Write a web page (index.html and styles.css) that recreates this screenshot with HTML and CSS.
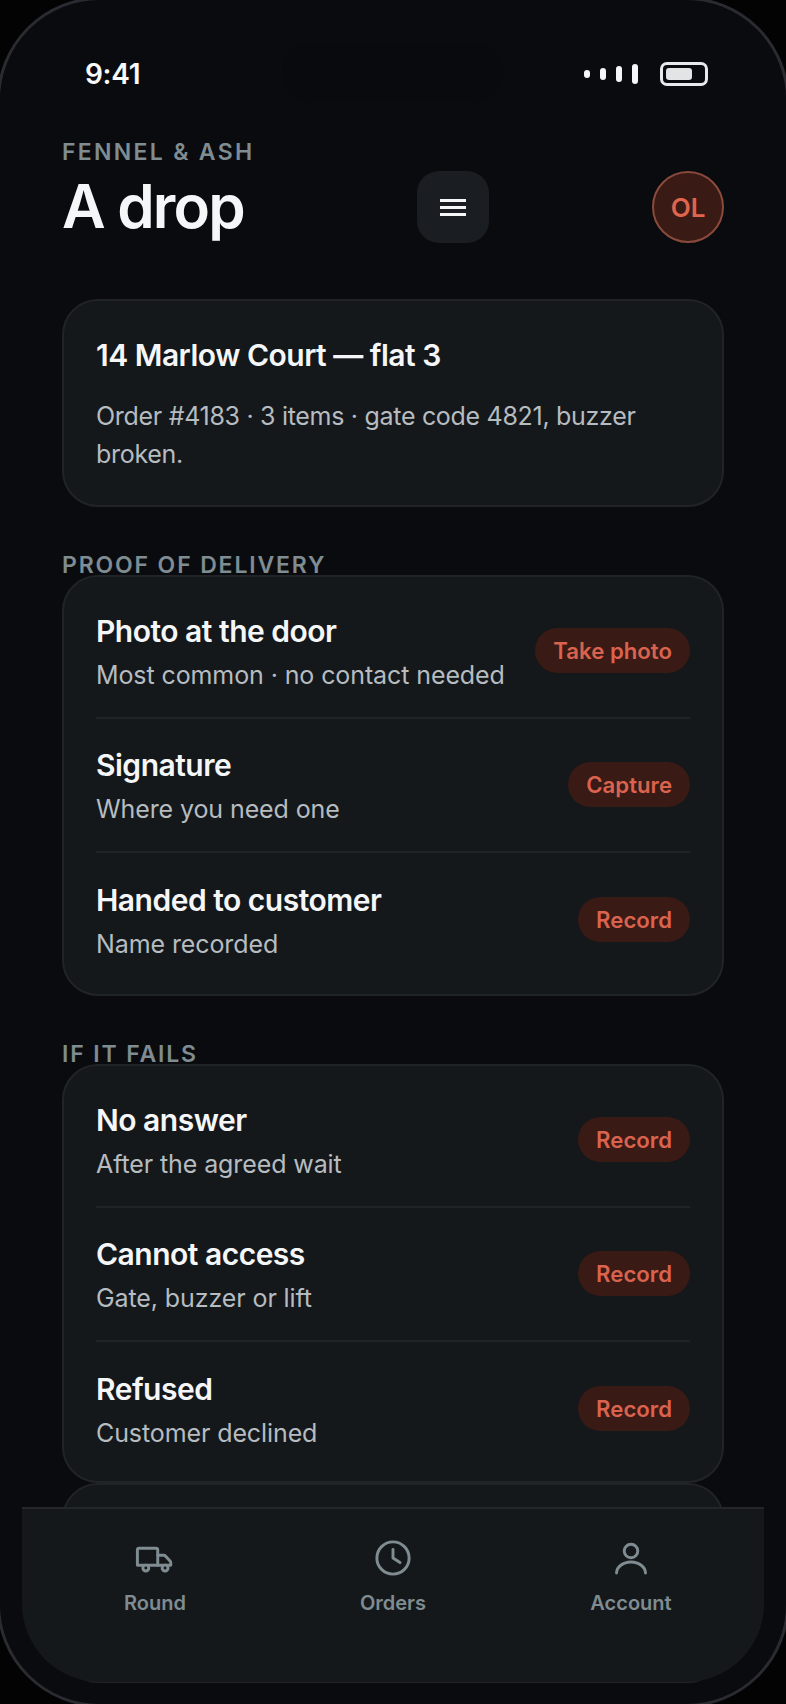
FILE: index.html
```html
<!DOCTYPE html>
<html lang="en">
<head>
<meta charset="utf-8">
<title>A drop</title>
<link rel="stylesheet" href="styles.css">
</head>
<body>
<div class="device">
  <div class="island"></div>
  <div class="status">
    <span class="time">9:41</span>
    <div class="status-icons">
      <div class="signal">
        <i class="s1"></i><i class="s2"></i><i class="s3"></i><i class="s4"></i>
      </div>
      <div class="battery"><i></i></div>
    </div>
  </div>
  <header class="header">
    <div class="heading">
      <div class="brand">FENNEL &amp; ASH</div>
      <h1 class="title">A drop</h1>
    </div>
    <button class="menu" aria-label="Menu"><i></i><i></i><i></i></button>
    <div class="avatar">OL</div>
  </header>
  <main class="content">
    <section class="card summary">
      <h2 class="summary-title">14 Marlow Court — flat 3</h2>
      <p class="summary-text">Order #4183 · 3 items · gate code 4821, buzzer broken.</p>
    </section>
    <h3 class="section-label">PROOF OF DELIVERY</h3>
    <section class="card list">
      <div class="row"><div class="row-text"><div class="row-title">Photo at the door</div><div class="row-sub">Most common · no contact needed</div></div><span class="pill">Take photo</span></div>
      <div class="row"><div class="row-text"><div class="row-title">Signature</div><div class="row-sub">Where you need one</div></div><span class="pill">Capture</span></div>
      <div class="row"><div class="row-text"><div class="row-title">Handed to customer</div><div class="row-sub">Name recorded</div></div><span class="pill">Record</span></div>
    </section>
    <h3 class="section-label">IF IT FAILS</h3>
    <section class="card list list-tight">
      <div class="row"><div class="row-text"><div class="row-title">No answer</div><div class="row-sub">After the agreed wait</div></div><span class="pill">Record</span></div>
      <div class="row"><div class="row-text"><div class="row-title">Cannot access</div><div class="row-sub">Gate, buzzer or lift</div></div><span class="pill">Record</span></div>
      <div class="row"><div class="row-text"><div class="row-title">Refused</div><div class="row-sub">Customer declined</div></div><span class="pill">Record</span></div>
    </section>
    <section class="card peek"></section>
  </main>
  <nav class="tabbar">
    <div class="tab">
      <svg class="tab-icon" viewBox="0 0 24 24"><path d="M2.400 16V7.700a1 1 0 0 1 1-1h9.100a1 1 0 0 1 1 1V16z"/><path d="M13.500 10.500h3.200a1.500 1.500 0 0 1 1.100.5l2.400 2.600a1 1 0 0 1 .4.8V16h-7.100"/><circle class="wheel" cx="7" cy="17.500" r="1.600"/><circle class="wheel" cx="17.500" cy="17.500" r="1.600"/></svg>
      <span class="tab-label">Round</span>
    </div>
    <div class="tab">
      <svg class="tab-icon" viewBox="0 0 24 24"><circle cx="12" cy="12" r="8.800"/><path d="M12 7.300V12l3.800 2.500"/></svg>
      <span class="tab-label">Orders</span>
    </div>
    <div class="tab">
      <svg class="tab-icon" viewBox="0 0 24 24"><circle cx="12" cy="8.200" r="3.700"/><path d="M4.100 20.200a7.900 6 0 0 1 15.800 0"/></svg>
      <span class="tab-label">Account</span>
    </div>
  </nav>
</div>
</body>
</html>
```
FILE: styles.css
```css
* { box-sizing: border-box; }
html, body { margin: 0; padding: 0; background: #030304; }
body { width: 786px; height: 1704px; overflow: hidden; font-family: Inter, "Liberation Sans", sans-serif; color: #f5f6f8; }
.device { position: relative; width: 786px; height: 1704px; border-radius: 100px; background: #0a0b0e; }
.device::after { content: ""; position: absolute; inset: -3px; border: 3px solid #2a2a30; border-radius: 103px; pointer-events: none; }
.island { position: absolute; left: 282px; top: 43px; width: 222px; height: 59px; border-radius: 30px; background: #090a0d; }
.status { position: relative; top: 62px; display: flex; align-items: center; justify-content: space-between; height: 24px; margin: 0 78px 0 85px; }
.time { font-size: 28px; font-weight: 600; line-height: 24px; letter-spacing: -0.3px; color: #f8f9fa; }
.status-icons { display: flex; align-items: center; gap: 22px; }
.signal { display: flex; align-items: center; gap: 10px; }
.signal i { display: block; width: 6px; border-radius: 3px; background: #f5f6f8; }
.s1 { height: 8px; } .s2 { height: 12px; } .s3 { height: 16px; } .s4 { height: 20px; }
.battery { width: 48px; height: 24px; padding: 3px; border: 3px solid #e8e9ec; border-radius: 7px; }
.battery i { display: block; width: 26px; height: 12px; border-radius: 3px; background: #e3e4e6; }
.header { display: flex; align-items: flex-end; justify-content: space-between; padding: 114px 62px 0; }
.heading { width: 192px; }
.brand { font-size: 23px; font-weight: 600; letter-spacing: 0.1em; line-height: 28px; color: #7f8c91; white-space: nowrap; }
.title { margin: 3px 0 0; font-size: 60px; font-weight: 600; letter-spacing: -0.03em; line-height: 74px; color: #f5f6f8; white-space: nowrap; }
.menu { display: flex; flex-direction: column; align-items: center; justify-content: center; gap: 4px; width: 72px; height: 72px; padding: 0; border: 0; border-radius: 22px; background: #1a1e23; }
.menu i { display: block; width: 26px; height: 3px; background: #f5f6f8; }
.avatar { display: flex; align-items: center; justify-content: center; width: 72px; height: 72px; border: 2px solid #8a4a3c; border-radius: 50%; background: #3a1a14; color: #e0654f; font-size: 26px; font-weight: 600; }
.content { padding: 56px 62px 0; }
.card { background: #14181b; border: 2px solid #202428; border-radius: 36px; }
.summary { height: 208px; padding: 35px 32px 0; }
.summary-title { margin: 0; font-size: 30px; font-weight: 600; letter-spacing: -0.5px; line-height: 38px; color: #f5f6f8; }
.summary-text { margin: 23px 0 0; font-size: 25px; letter-spacing: -0.3px; line-height: 38px; color: #b6bcc0; }
.section-label { margin: 47px 0 -2px; font-size: 23px; font-weight: 600; letter-spacing: 1.85px; line-height: 23px; color: #7f8c91; }
.list { padding: 8px 32px 7px; }
.list-tight { padding-bottom: 5px; }
.row { display: flex; align-items: center; justify-content: space-between; height: 134px; border-bottom: 2px solid #202428; }
.row:last-child { border-bottom: 0; }
.row-text { padding-top: 2px; }
.row-title { font-size: 30px; font-weight: 600; letter-spacing: -0.5px; line-height: 40px; color: #f5f6f8; }
.row-sub { margin-top: 6px; font-size: 25px; letter-spacing: -0.1px; line-height: 36px; color: #b6bcc0; }
.pill { margin-bottom: 1px; padding: 0 18px; height: 45px; line-height: 45px; border-radius: 23px; background: #3a1a14; color: #d9634e; font-size: 22.2px; font-weight: 600; white-space: nowrap; }
.peek { height: 200px; }
.tabbar { position: absolute; left: 22px; right: 22px; bottom: 22px; display: flex; justify-content: center; height: 175px; padding-top: 27px; background: #15181b; border-top: 2px solid #23272b; border-radius: 0 0 78px 78px; }
.tab { display: flex; flex-direction: column; align-items: center; width: 238px; gap: 9px; }
.tab-icon { width: 44px; height: 44px; fill: none; stroke: #7f8c91; stroke-width: 1.6; stroke-linecap: round; stroke-linejoin: round; }
.wheel { fill: #15181b; }
.tab-label { font-size: 20px; font-weight: 600; line-height: 28px; color: #7f8c91; }
```
